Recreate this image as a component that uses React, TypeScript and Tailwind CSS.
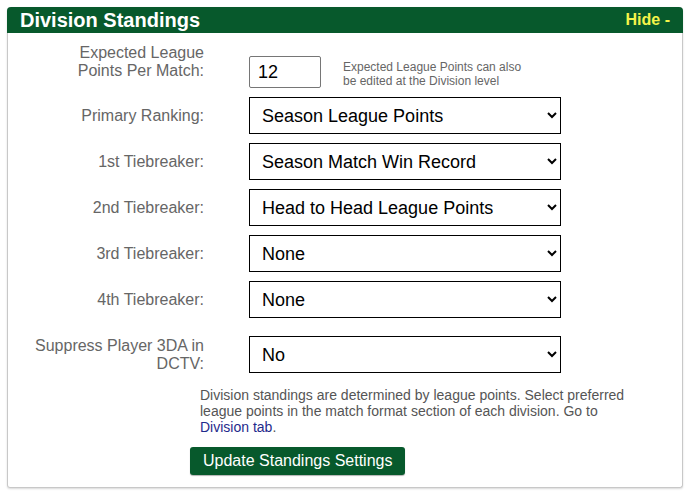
import { useState } from 'react';

const tiebreakOptions = [
  'Season League Points',
  'Season Match Win Record',
  'Head to Head League Points',
  'None',
];

interface SelectRowProps {
  label: string;
  value: string;
  options: string[];
  onChange: (v: string) => void;
}

function SelectRow({ label, value, options, onChange }: SelectRowProps) {
  return (
    <div className="flex items-center mt-[9px]">
      <label className="w-[196px] pl-[26px] text-right text-[16px] leading-[18px] text-[#666]">{label}</label>
      <select
        value={value}
        onChange={e => onChange(e.target.value)}
        className="ml-[45px] w-[312px] h-[37px] border border-black bg-white pl-[8px] text-[18px] text-black"
      >
        {options.map(o => (
          <option key={o}>{o}</option>
        ))}
      </select>
    </div>
  );
}

export default function App() {
  const [points, setPoints] = useState('12');
  const [primary, setPrimary] = useState('Season League Points');
  const [tb1, setTb1] = useState('Season Match Win Record');
  const [tb2, setTb2] = useState('Head to Head League Points');
  const [tb3, setTb3] = useState('None');
  const [tb4, setTb4] = useState('None');
  const [suppress, setSuppress] = useState('No');

  return (
    <div className="w-[690px] h-[495px] bg-white pt-[7px] pl-[7px] font-['Liberation_Sans',Arial,sans-serif]">
      <div className="w-[676px] rounded-t-[4px] rounded-b-[3px] border border-t-0 border-[#c8c8c8] shadow-[0_1px_2px_rgba(0,0,0,0.15)]">
        {/* En-tête vert */}
        <div className="flex items-center justify-between h-[26px] -mx-px px-[13px] bg-[#07592c] rounded-t-[4px]">
          <h2 className="text-[20px] font-bold text-white leading-none">Division Standings</h2>
          <span className="text-[16px] font-bold text-[#f4f44a] leading-none">Hide -</span>
        </div>

        <div className="pt-[11px] pb-[12px]">
          <div className="flex items-start">
            <label className="w-[196px] pl-[26px] text-right text-[16px] leading-[18px] text-[#666]">
              Expected League Points Per Match:
            </label>
            <input
              value={points}
              onChange={e => setPoints(e.target.value)}
              className="ml-[45px] mt-[12px] w-[72px] h-[32px] border border-[#767676] rounded-[2px] px-[8px] text-[18px] text-black"
            />
            <p className="ml-[22px] mt-[16px] text-[12px] leading-[14px] text-[#666]">
              Expected League Points can also
              <br />
              be edited at the Division level
            </p>
          </div>

          <SelectRow label="Primary Ranking:" value={primary} options={tiebreakOptions} onChange={setPrimary} />
          <SelectRow label="1st Tiebreaker:" value={tb1} options={tiebreakOptions} onChange={setTb1} />
          <SelectRow label="2nd Tiebreaker:" value={tb2} options={tiebreakOptions} onChange={setTb2} />
          <SelectRow label="3rd Tiebreaker:" value={tb3} options={tiebreakOptions} onChange={setTb3} />
          <SelectRow label="4th Tiebreaker:" value={tb4} options={tiebreakOptions} onChange={setTb4} />

          <div className="flex items-start mt-[18px]">
            <label className="w-[196px] pl-[26px] pt-px text-right text-[16px] leading-[18px] text-[#666]">
              Suppress Player 3DA in DCTV:
            </label>
            <select
              value={suppress}
              onChange={e => setSuppress(e.target.value)}
              className="ml-[45px] w-[312px] h-[37px] border border-black bg-white pl-[8px] text-[18px] text-black"
            >
              <option>No</option>
              <option>Yes</option>
            </select>
          </div>

          <p className="ml-[192px] mt-[14px] w-[440px] text-[14px] leading-[16px] text-[#555]">
            Division standings are determined by league points. Select preferred league points in the match format
            section of each division. Go to <a className="text-[#1f2a8c]">Division tab</a>.
          </p>

          <button className="ml-[182px] mt-[12px] h-[28px] px-[13px] rounded-[3px] bg-[#07592c] text-[16px] text-white shadow-[0_1px_1px_rgba(0,0,0,0.3)]">
            Update Standings Settings
          </button>
        </div>
      </div>
    </div>
  );
}
